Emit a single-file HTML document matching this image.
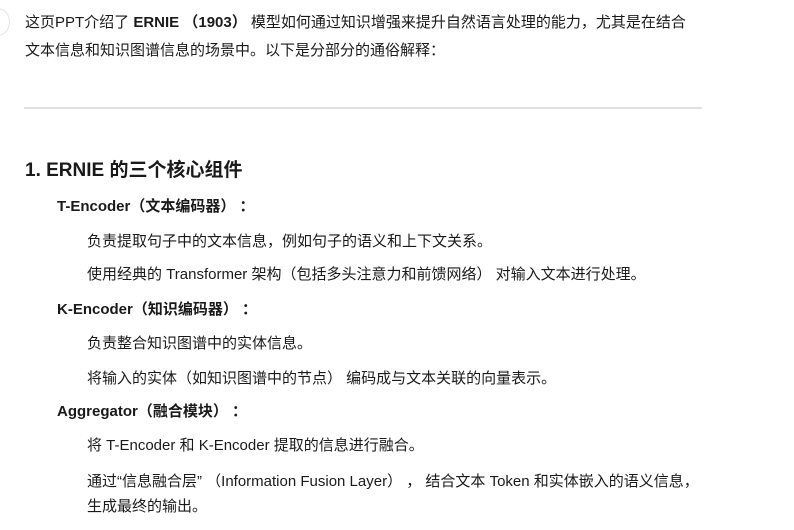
<!DOCTYPE html>
<html><head><meta charset="utf-8"><style>
body{margin:0;width:794px;height:530px;background:#fff;overflow:hidden;position:relative;font-family:"Liberation Sans","Noto Sans CJK SC",sans-serif;color:#1a1a1a;font-size:15px}
.a{position:absolute;white-space:nowrap;line-height:20px;margin-top:2px}
.b{font-weight:bold}
.circ{position:absolute;left:-14px;top:8px;width:22px;height:26px;border:1px solid #e4e4e4;border-radius:50%}
hr{position:absolute;left:24px;top:107px;width:678px;margin:0;border:0;border-top:2px solid #e0e0e0}
</style></head><body>
<div class="circ"></div>
<div class="a" style="left:25px;top:11px">这页PPT介绍了 <b>ERNIE （1903）</b> 模型如何通过知识增强来提升自然语言处理的能力，尤其是在结合</div>
<div class="a" style="left:25px;top:39px">文本信息和知识图谱信息的场景中。以下是分部分的通俗解释：</div>
<hr>
<div class="a b" style="left:25px;top:158px;font-size:19px;line-height:22px">1. ERNIE 的三个核心组件</div>
<div class="a b" style="left:57px;top:195px">T-Encoder（文本编码器） ：</div>
<div class="a" style="left:87px;top:230px">负责提取句子中的文本信息，例如句子的语义和上下文关系。</div>
<div class="a" style="left:87px;top:263px">使用经典的 Transformer 架构（包括多头注意力和前馈网络） 对输入文本进行处理。</div>
<div class="a b" style="left:57px;top:298px">K-Encoder（知识编码器） ：</div>
<div class="a" style="left:87px;top:332px">负责整合知识图谱中的实体信息。</div>
<div class="a" style="left:87px;top:367px">将输入的实体（如知识图谱中的节点） 编码成与文本关联的向量表示。</div>
<div class="a b" style="left:57px;top:400px">Aggregator（融合模块） ：</div>
<div class="a" style="left:87px;top:434px">将 T-Encoder 和 K-Encoder 提取的信息进行融合。</div>
<div class="a" style="left:87px;top:470px">通过“信息融合层” （Information Fusion Layer） ， 结合文本 Token 和实体嵌入的语义信息，</div>
<div class="a" style="left:87px;top:495px">生成最终的输出。</div>
</body></html>
